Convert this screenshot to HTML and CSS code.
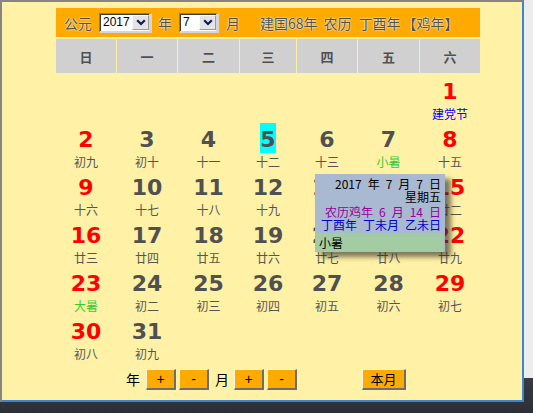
FILE: index.html
```html
<!DOCTYPE html>
<html lang="zh-CN">
<head>
<meta charset="utf-8">
<title>万年历</title>
<link rel="stylesheet" href="styles.css">
</head>
<body>
<div class="frame">
  <div class="cal">
    <div class="head">
      <span class="ht">公元</span>
      <span class="sel s1"><span class="val">2017</span><span class="dd"><svg width="10" height="7" viewBox="0 0 10 7"><path d="M1.2 1.2 L5 5 L8.8 1.2" fill="none" stroke="#0c1d5e" stroke-width="2.2"/></svg></span></span>
      <span class="ht m-nian">年</span>
      <span class="sel s2"><span class="val">7</span><span class="dd"><svg width="10" height="7" viewBox="0 0 10 7"><path d="M1.2 1.2 L5 5 L8.8 1.2" fill="none" stroke="#0c1d5e" stroke-width="2.2"/></svg></span></span>
      <span class="ht m-yue">月</span>
      <span class="ht m-jg">建国68年</span>
      <span class="ht m-nl">农历</span>
      <span class="ht m-gz">丁酉年</span>
      <span class="ht m-sx">【鸡年】</span>
    </div>
    <div class="week">
      <div>日</div><div>一</div><div>二</div><div>三</div><div>四</div><div>五</div><div>六</div>
    </div>
    <div class="days">
      <div class="cell"></div><div class="cell"></div><div class="cell"></div><div class="cell"></div><div class="cell"></div><div class="cell"></div>
      <div class="cell"><div class="num red">1</div><div class="lu fest">建党节</div></div>

      <div class="cell"><div class="num red">2</div><div class="lu">初九</div></div>
      <div class="cell"><div class="num">3</div><div class="lu">初十</div></div>
      <div class="cell"><div class="num">4</div><div class="lu">十一</div></div>
      <div class="cell"><div class="num"><span class="today">5</span></div><div class="lu">十二</div></div>
      <div class="cell"><div class="num">6</div><div class="lu">十三</div></div>
      <div class="cell"><div class="num">7</div><div class="lu term">小暑</div></div>
      <div class="cell"><div class="num red">8</div><div class="lu">十五</div></div>

      <div class="cell"><div class="num red">9</div><div class="lu">十六</div></div>
      <div class="cell"><div class="num">10</div><div class="lu">十七</div></div>
      <div class="cell"><div class="num">11</div><div class="lu">十八</div></div>
      <div class="cell"><div class="num">12</div><div class="lu">十九</div></div>
      <div class="cell"><div class="num">13</div><div class="lu">二十</div></div>
      <div class="cell"><div class="num">14</div><div class="lu">廿一</div></div>
      <div class="cell"><div class="num red">15</div><div class="lu">廿二</div></div>

      <div class="cell"><div class="num red">16</div><div class="lu">廿三</div></div>
      <div class="cell"><div class="num">17</div><div class="lu">廿四</div></div>
      <div class="cell"><div class="num">18</div><div class="lu">廿五</div></div>
      <div class="cell"><div class="num">19</div><div class="lu">廿六</div></div>
      <div class="cell"><div class="num">20</div><div class="lu">廿七</div></div>
      <div class="cell"><div class="num">21</div><div class="lu">廿八</div></div>
      <div class="cell"><div class="num red">22</div><div class="lu">廿九</div></div>

      <div class="cell"><div class="num red">23</div><div class="lu term">大暑</div></div>
      <div class="cell"><div class="num">24</div><div class="lu">初二</div></div>
      <div class="cell"><div class="num">25</div><div class="lu">初三</div></div>
      <div class="cell"><div class="num">26</div><div class="lu">初四</div></div>
      <div class="cell"><div class="num">27</div><div class="lu">初五</div></div>
      <div class="cell"><div class="num">28</div><div class="lu">初六</div></div>
      <div class="cell"><div class="num red">29</div><div class="lu">初七</div></div>

      <div class="cell"><div class="num red">30</div><div class="lu">初八</div></div>
      <div class="cell"><div class="num">31</div><div class="lu">初九</div></div>
      <div class="cell"></div><div class="cell"></div><div class="cell"></div><div class="cell"></div><div class="cell"></div>
    </div>
    <div class="ctrl">
      <span class="lbl">年</span>
      <span class="btn b1">+</span>
      <span class="btn b2">-</span>
      <span class="lbl l-yue">月</span>
      <span class="btn b3">+</span>
      <span class="btn b2">-</span>
      <span class="btn bnow">本月</span>
    </div>
  </div>
  <div class="tip">
    <div class="tl">2017&ensp;年&ensp;7&ensp;月&ensp;7&ensp;日<br>星期五</div>
    <div class="tl second"><span class="lunar">农历鸡年&ensp;6&ensp;月&ensp;14&ensp;日</span><br><span class="gz">丁酉年&ensp;丁未月&ensp;乙未日</span></div>
    <div class="tterm">小暑</div>
  </div>
</div>
</body>
</html>
```
FILE: styles.css
```css
html, body {
  margin: 0;
  padding: 0;
}
body {
  width: 533px;
  height: 413px;
  overflow: hidden;
  background: linear-gradient(to bottom, #ececec 0, #ececec 378px, #363b43 378px, #2c3036 413px);
  font-family: "Noto Sans CJK SC", sans-serif;
}
.frame {
  position: relative;
  width: 520px;
  height: 398px;
  background: #fff1a6;
  border-top: 2px solid #858585;
  border-left: 2px solid #858585;
  border-right: 2px solid #3b86d4;
  border-bottom: 2px solid #3b86d4;
}
.cal {
  margin-left: 54px;
  padding-top: 6px;
  width: 424px;
}
.head {
  height: 29px;
  background: #ffaa00;
  display: flex;
  align-items: center;
  padding-left: 8px;
  box-sizing: border-box;
}
.ht {
  font-family: "Noto Sans CJK SC", sans-serif;
  font-size: 14px;
  line-height: 20px;
  color: #505050;
  text-shadow: 0 0 2px #fff, 0 0 1px #fff;
  white-space: nowrap;
}
.sel {
  display: flex;
  height: 20px;
  box-sizing: border-box;
  background: #fff;
  border-style: solid;
  border-width: 1px 3px 2px 1px;
  border-color: #7e7e7e #d6d6d6 #d6d6d6 #7e7e7e;
  box-shadow: inset 1px 1px 0 #3c3c3c;
  margin-left: 7px;
}
.s1 { width: 53px; }
.s2 { width: 40px; }
.val {
  flex: 1;
  font-family: "Liberation Sans", sans-serif;
  font-size: 12px;
  line-height: 17px;
  padding-left: 3px;
  color: #000;
}
.dd {
  width: 17px;
  margin: 1px 0;
  box-sizing: border-box;
  background: #e4e4e4;
  border: 1px solid;
  border-color: #fafafa #9a9a9a #9a9a9a #fafafa;
  display: flex;
  align-items: center;
  justify-content: center;
}
.m-nian { margin-left: 6px; }
.m-yue { margin-left: 7px; }
.m-jg { margin-left: 20px; }
.m-nl { margin-left: 6px; }
.m-gz { margin-left: 7px; }
.m-sx { margin-left: 2px; }

.week, .days {
  display: grid;
  grid-template-columns: 60px 60px 61px 56px 60px 61px 60px;
  column-gap: 1px;
  margin-top: 2px;
}
.week > div {
  height: 34px;
  background: #d0d0d0;
  display: flex;
  align-items: center;
  justify-content: center;
  font-weight: bold;
  font-size: 13px;
  color: #505050;
}
.cell {
  height: 48px;
  box-sizing: border-box;
  padding-top: 4px;
  text-align: center;
}
.num {
  font-family: "DejaVu Sans", sans-serif;
  font-weight: bold;
  font-size: 22px;
  line-height: 26px;
  color: #505050;
}
.num.red { color: #ff0000; }
.today {
  background: #00ffff;
  padding: 4px 0.5px 1px;
}
.lu {
  margin-top: 2px;
  font-size: 12px;
  line-height: 14px;
  color: #555555;
}
.lu.fest { color: #0000ff; }
.lu.term { color: #33cc33; }

.ctrl {
  display: flex;
  align-items: center;
  height: 20px;
  margin-top: 6px;
  padding-left: 70px;
}
.lbl {
  font-size: 14px;
  line-height: 20px;
  color: #000;
}
.btn {
  box-sizing: border-box;
  width: 30px;
  height: 21px;
  background: #ffaa00;
  border-style: solid;
  border-width: 1px 2px 2px 1px;
  border-color: #fff6e0 #6e6e6e #6e6e6e #fff6e0;
  display: flex;
  align-items: center;
  justify-content: center;
  font-family: "Liberation Sans", sans-serif;
  font-size: 14px;
  color: #000;
}
.b1 { margin-left: 6px; }
.b2 { margin-left: 3px; }
.l-yue { margin-left: 6px; }
.b3 { margin-left: 5px; }
.bnow {
  width: 44px;
  margin-left: 65px;
  font-family: "Noto Sans CJK SC", sans-serif;
  font-size: 13px;
}

.tip {
  position: absolute;
  left: 313px;
  top: 172px;
  width: 130px;
  height: 78px;
  box-sizing: border-box;
  background: #a9b9d2;
  padding-top: 3px;
  box-shadow: 6px 5px 5px rgba(40, 40, 40, 0.6);
  font-size: 12px;
  line-height: 13px;
}
.tl {
  text-align: right;
  padding-right: 4px;
  color: #000;
}
.tl.second { margin-top: 2px; }
.lunar { color: #990099; }
.gz { color: #0000cc; }
.tterm {
  margin: 2px 2px 0 1px;
  height: 19px;
  background: #a3cca3;
  color: #000;
  padding-left: 3px;
  line-height: 19px;
}
```
